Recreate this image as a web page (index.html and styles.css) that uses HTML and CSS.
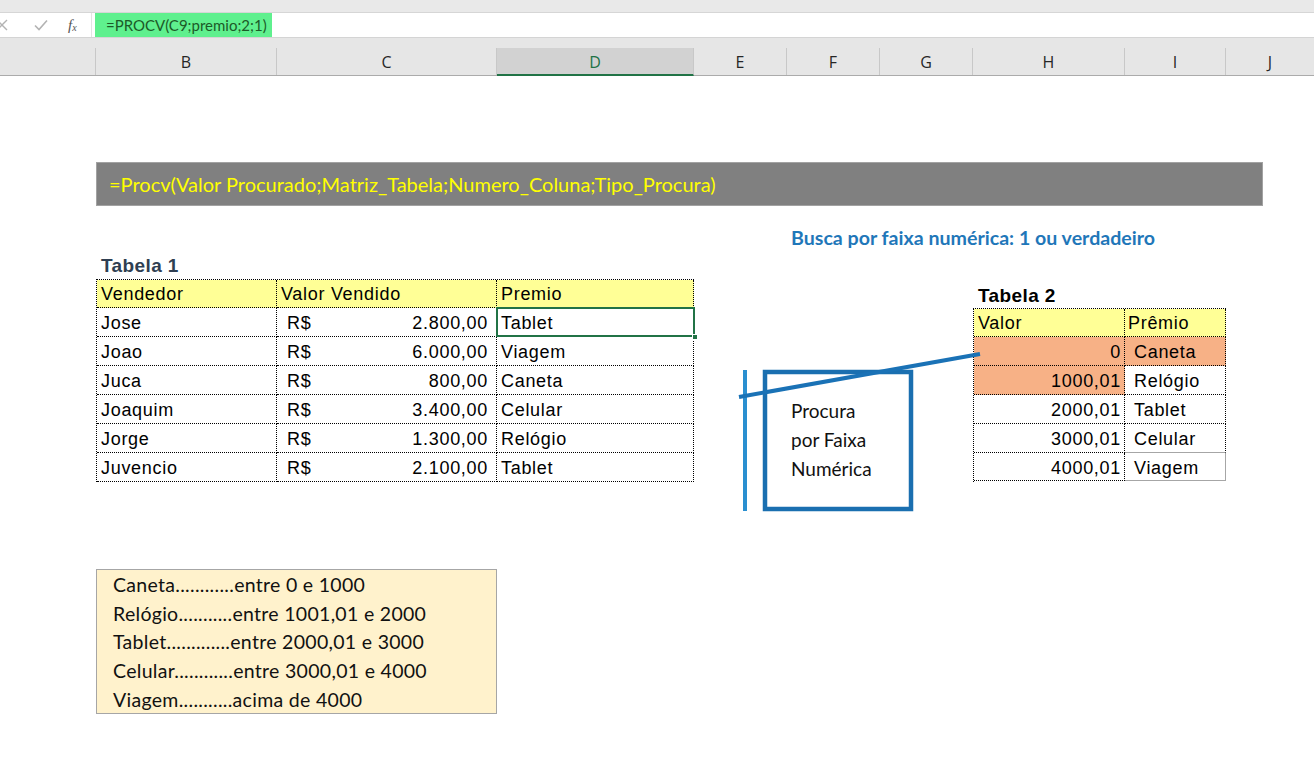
FILE: index.html
```html
<!DOCTYPE html>
<html lang="pt-BR">
<head>
<meta charset="utf-8">
<title>PROCV</title>
<link rel="stylesheet" href="styles.css">
</head>
<body>
<div class="app">
  <div class="topstrip"></div>
  <div class="fbar">
    <div class="fbar-icons">
      <svg class="ico ico-x" width="12" height="12" viewBox="0 0 12 12"><path d="M1 1 L11 11 M11 1 L1 11" stroke="#b3b3b3" stroke-width="1.4" fill="none"/></svg>
      <svg class="ico ico-v" width="14" height="12" viewBox="0 0 14 12"><path d="M1 6.5 L5 10.5 L13 1.5" stroke="#b3b3b3" stroke-width="1.6" fill="none"/></svg>
      <span class="fx">f<sub>x</sub></span>
    </div>
    <div class="fbar-input"><span class="formula">=PROCV(C9;premio;2;1)</span></div>
  </div>
  <div class="fbar-gap"></div>
  <div class="colheads">
    <div class="ch"></div>
    <div class="ch">B</div>
    <div class="ch">C</div>
    <div class="ch ch-active">D</div>
    <div class="ch">E</div>
    <div class="ch">F</div>
    <div class="ch">G</div>
    <div class="ch">H</div>
    <div class="ch">I</div>
    <div class="ch ch-last">J</div>
  </div>
  <div class="sheet">
    <div class="shape-formula">=Procv(Valor Procurado;Matriz_Tabela;Numero_Coluna;Tipo_Procura)</div>

    <div class="title-blue">Busca por faixa numérica: 1 ou verdadeiro</div>
    <div class="t1-title">Tabela 1</div>

    <div class="t1">
      <div class="c hd">Vendedor</div><div class="c hd">Valor Vendido</div><div class="c hd">Premio</div>
      <div class="c">Jose</div><div class="c money"><span>R$</span><span>2.800,00</span></div><div class="c sel">Tablet<span class="handle"></span></div>
      <div class="c">Joao</div><div class="c money"><span>R$</span><span>6.000,00</span></div><div class="c">Viagem</div>
      <div class="c">Juca</div><div class="c money"><span>R$</span><span>800,00</span></div><div class="c">Caneta</div>
      <div class="c">Joaquim</div><div class="c money"><span>R$</span><span>3.400,00</span></div><div class="c">Celular</div>
      <div class="c">Jorge</div><div class="c money"><span>R$</span><span>1.300,00</span></div><div class="c">Relógio</div>
      <div class="c">Juvencio</div><div class="c money"><span>R$</span><span>2.100,00</span></div><div class="c">Tablet</div>
    </div>

    <div class="t2-title">Tabela 2</div>
    <div class="t2">
      <div class="c hd">Valor</div><div class="c hd">Prêmio</div>
      <div class="c num orange">0</div><div class="c pr orange">Caneta</div>
      <div class="c num orange">1000,01</div><div class="c pr">Relógio</div>
      <div class="c num">2000,01</div><div class="c pr">Tablet</div>
      <div class="c num">3000,01</div><div class="c pr solid-b">Celular</div>
      <div class="c num">4000,01</div><div class="c pr solid-r">Viagem</div>
    </div>

    <div class="proc proc-1">Procura</div>
    <div class="proc proc-2">por Faixa</div>
    <div class="proc proc-3">Numérica</div>

    <svg class="shapes" width="1314" height="703" viewBox="0 0 1314 703">
      <rect x="743" y="294" width="4" height="141" fill="#2a8fd0"/>
      <rect x="765" y="296" width="146" height="137" fill="none" stroke="#1a6fb0" stroke-width="4.5"/>
      <line x1="739" y1="321" x2="980" y2="278" stroke="#1a72b6" stroke-width="4"/>
    </svg>

    <div class="note">
      <div class="nl">Caneta............entre 0 e 1000</div>
      <div class="nl">Relógio...........entre 1001,01 e 2000</div>
      <div class="nl">Tablet.............entre 2000,01 e 3000</div>
      <div class="nl">Celular............entre 3000,01 e 4000</div>
      <div class="nl">Viagem...........acima de 4000</div>
    </div>
  </div>
</div>
</body>
</html>
```

FILE: styles.css
```css
* { box-sizing: border-box; }
html, body { margin: 0; padding: 0; }
body {
  width: 1314px;
  height: 780px;
  overflow: hidden;
  background: #ffffff;
  font-family: "Liberation Sans", Arial, sans-serif;
}
.app {
  display: flex;
  flex-direction: column;
  width: 1314px;
  height: 780px;
}
.topstrip {
  height: 13px;
  background: #e9e9e9;
  border-bottom: 1px solid #d6d6d6;
}
.fbar {
  height: 25px;
  display: flex;
  background: #ffffff;
  border-bottom: 1px solid #d4d4d4;
}
.fbar-icons {
  width: 92px;
  position: relative;
  display: flex;
  align-items: center;
  border-right: 1px solid #e3e3e3;
}
.ico-x { margin-left: -4px; }
.ico-v { margin-left: 26px; }
.fx {
  margin-left: 20px;
  font-family: "Liberation Serif", "Times New Roman", serif;
  font-style: italic;
  font-size: 15px;
  color: #555555;
  line-height: 1;
}
.fx sub {
  font-size: 10px;
  vertical-align: -1px;
}
.fbar-input {
  flex: 1;
  display: flex;
  align-items: stretch;
  padding-left: 3px;
}
.formula {
  width: 177px;
  background: #5ff08e;
  color: #1c5a28;
  font-family: Lato, "Open Sans", sans-serif;
  font-size: 15px;
  display: flex;
  align-items: center;
  padding-left: 11px;
}
.fbar-gap {
  height: 10px;
  background: #e6e6e6;
}
.colheads {
  height: 28px;
  display: grid;
  grid-template-columns: 96px 181px 220px 197px 93px 93px 93px 152px 101px 88px;
  background: #e6e6e6;
  border-bottom: 1px solid #ababab;
}
.ch {
  display: flex;
  align-items: center;
  justify-content: center;
  border-right: 1px solid #c8c8c8;
  font-family: "Open Sans", sans-serif;
  font-size: 16px;
  color: #262626;
  padding-top: 1px;
}
.ch-last { border-right: none; }
.ch-active {
  background: #d2d2d2;
  color: #217346;
  border-bottom: 2px solid #217346;
  margin-bottom: -1px;
}
.sheet {
  flex: 1;
  position: relative;
  overflow: hidden;
  display: grid;
  grid-template-columns: 96px 181px 220px 197px 93px 93px 93px 152px 101px 88px;
  grid-auto-rows: 29px;
  align-content: start;
}
.shape-formula {
  position: absolute;
  left: 96px;
  top: 86px;
  width: 1167px;
  height: 44px;
  background: #808080;
  border: 1px solid #a2a2a2;
  color: #ffff00;
  font-family: Lato, "Open Sans", sans-serif;
  font-size: 20px;
  display: flex;
  align-items: center;
  padding-left: 12px;
  padding-bottom: 1px;
}
.title-blue {
  grid-column: 6 / span 5;
  grid-row: 6;
  padding-left: 4px;
  display: flex;
  align-items: center;
  padding-top: 3px;
  font-family: Lato, "Open Sans", sans-serif;
  font-weight: 700;
  font-size: 19.6px;
  color: #1f77b9;
  white-space: nowrap;
}
.t1-title, .t2-title {
  grid-row: 7;
  grid-column: 2;
  display: flex;
  align-items: flex-end;
  padding-left: 5px;
  padding-bottom: 2px;
  font-weight: 700;
  font-size: 19px;
  letter-spacing: 0.4px;
  color: #2f3f52;
  white-space: nowrap;
}
.t2-title {
  grid-row: 8;
  grid-column: 8;
  color: #000000;
  padding-bottom: 1px;
}
.t1, .t2 {
  display: grid;
  border-top: 1px dotted #000;
  border-left: 1px dotted #000;
  font-size: 18px;
  letter-spacing: 0.7px;
  color: #000;
}
.t1 {
  grid-column: 2 / 5;
  grid-row: 8 / 15;
  grid-template-columns: 180px 220px 197px;
  grid-template-rows: 28px repeat(6, 29px);
}
.t2 {
  grid-column: 8 / 10;
  grid-row: 9 / 15;
  grid-template-columns: 151px 101px;
  grid-template-rows: 28px repeat(4, 29px) 28px;
}
.c {
  position: relative;
  display: flex;
  align-items: center;
  padding: 3px 4px 0 4px;
  border-right: 1px dotted #000;
  border-bottom: 1px dotted #000;
  white-space: nowrap;
}
.hd {
  background: #ffff96;
  padding-top: 2px;
}
.money {
  justify-content: space-between;
  padding-left: 10px;
  padding-right: 8px;
}
.sel::after {
  content: "";
  position: absolute;
  left: -1px;
  top: -1px;
  right: -2px;
  bottom: -1px;
  border: 2px solid #217346;
}
.handle {
  position: absolute;
  right: -5px;
  bottom: -4px;
  width: 6px;
  height: 6px;
  background: #217346;
  border: 1px solid #ffffff;
  z-index: 2;
}
.num {
  justify-content: flex-end;
  padding-right: 3px;
}
.pr { padding-left: 9px; }
.t2 .hd:nth-child(2) { padding-left: 3px; }
.orange { background: #f7b186; }
.solid-b { border-bottom: 1px solid #a6a6a6; }
.solid-r {
  border-right: 1px solid #a6a6a6;
  border-bottom: 1px solid #a6a6a6;
}
.proc {
  grid-column: 6 / span 2;
  display: flex;
  align-items: center;
  padding-left: 4px;
  padding-top: 2px;
  font-family: Lato, "Open Sans", sans-serif;
  font-size: 19px;
  color: #111;
  white-space: nowrap;
}
.proc-1 { grid-row: 12; }
.proc-2 { grid-row: 13; }
.proc-3 { grid-row: 14; }
.shapes {
  position: absolute;
  left: 0;
  top: 0;
  pointer-events: none;
}
.note {
  grid-column: 2 / 4;
  grid-row: 18 / 23;
  background: #fff2cc;
  border: 1px solid #a6a6a6;
  display: grid;
  grid-template-rows: repeat(5, 1fr);
  padding-left: 16px;
  font-family: Lato, "Open Sans", sans-serif;
  font-size: 19.5px;
  letter-spacing: 0.3px;
  color: #111;
}
.nl {
  display: flex;
  align-items: center;
  padding-top: 1px;
  white-space: nowrap;
}
```
